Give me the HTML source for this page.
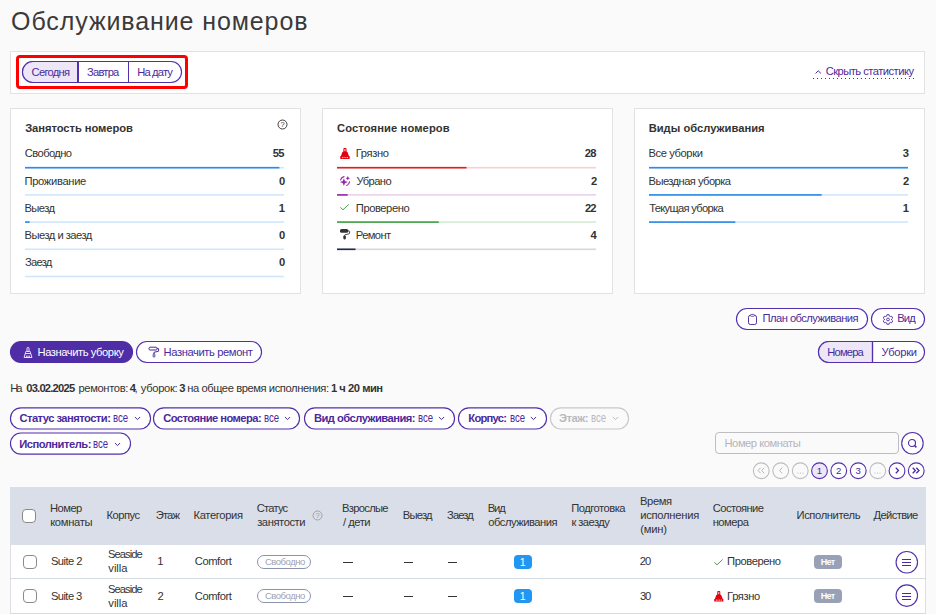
<!DOCTYPE html>
<html lang="ru">
<head>
<meta charset="utf-8">
<title>Обслуживание номеров</title>
<style>
*{box-sizing:border-box;margin:0;padding:0}
html,body{width:936px;height:614px;overflow:hidden}
body{background:#fafafa;font-family:"Liberation Sans",sans-serif;font-size:11.2px;color:#333;position:relative}
.abs{position:absolute}
.t{position:absolute;white-space:nowrap}
.panel{position:absolute;background:#fff;border:1px solid #e2e2e2}
.cb{position:absolute;width:14px;height:14px;border:1px solid #8a8a8a;border-radius:4px;background:#fff}
svg{overflow:visible}
</style>
</head>
<body>
<span class="t" style="left:11.1px;top:4.64px;line-height:32px;letter-spacing:0.89px;font-size:25px;color:#3a3a3a">Обслуживание номеров</span>
<div class="panel" style="left:10px;top:51px;width:915px;height:43px"></div>
<div class="abs" style="left:16px;top:55px;width:172px;height:34px;border:3px solid #f00;border-radius:4px"></div>
<svg class="abs" style="left:0;top:0" width="936" height="614" viewBox="0 0 936 614"><rect x="22.46" y="61.46" width="159.08" height="21.08" rx="10.54" fill="#fff" stroke="#5230ad" stroke-width="1.12"/><path d="M33 61.46H78V82.54H33A10.54 10.54 0 0 1 33 61.46Z" fill="#ece6f7" stroke="#5230ad" stroke-width="1.12"/><path d="M78 61.46V82.54" stroke="#5230ad" stroke-width="2"/><path d="M128.500 61.500V82.500" stroke="#5230ad" stroke-width="1"/></svg>
<span class="t" style="left:31.6px;top:64.62px;line-height:14px;letter-spacing:-0.73px;color:#4a2a9c">Сегодня</span>
<span class="t" style="left:87.05px;top:64.62px;line-height:14px;letter-spacing:-0.79px;color:#4a2a9c">Завтра</span>
<span class="t" style="left:137.25px;top:64.62px;line-height:14px;letter-spacing:-0.85px;color:#4a2a9c">На дату</span>
<svg class="abs" style="left:814.5px;top:69.5px" width="6.5" height="4" viewBox="0 0 6.5 4"><path d="M.6 3.4 3.25.8 5.9 3.4" fill="none" stroke="#4a2a9c" stroke-width="1"/></svg>
<span class="t" style="left:825.65px;top:64.42px;line-height:14px;letter-spacing:-0.53px;color:#4a2a9c">Скрыть статистику</span>
<div class="abs" style="left:813px;top:78px;width:102px;height:1px;background:repeating-linear-gradient(90deg,#4a2a9c 0,#4a2a9c 1.5px,transparent 1.5px,transparent 4px)"></div>
<div class="panel" style="left:10px;top:108px;width:291px;height:186px"></div>
<div class="panel" style="left:322px;top:108px;width:291px;height:186px"></div>
<div class="panel" style="left:634px;top:108px;width:291px;height:186px"></div>
<span class="t" style="left:25.15px;top:121.12px;line-height:14px;letter-spacing:-0.06px;font-weight:700">Занятость номеров</span>
<span class="t" style="left:336.95px;top:121.12px;line-height:14px;letter-spacing:0.11px;font-weight:700">Состояние номеров</span>
<span class="t" style="left:648.65px;top:121.12px;line-height:14px;letter-spacing:0.01px;font-weight:700">Виды обслуживания</span>
<svg class="abs" style="left:277px;top:118.8px" width="11" height="11" viewBox="0 0 11 11"><circle cx="5.5" cy="5.5" r="4.5" fill="none" stroke="#333" stroke-width="0.95"/><text x="5.5" y="8" font-size="7.5" font-family="Liberation Sans, sans-serif" text-anchor="middle" fill="#333">?</text></svg>
<span class="t" style="left:24.85px;top:146.12px;line-height:14px;letter-spacing:-0.61px">Свободно</span>
<span class="t" style="left:272.85px;top:146.12px;line-height:14px;letter-spacing:-0.8px;font-weight:700">55</span>
<span class="t" style="left:24.5px;top:174.12px;line-height:14px;letter-spacing:-0.33px">Проживание</span>
<span class="t" style="left:278.95px;top:174.12px;line-height:14px;letter-spacing:0px;font-weight:700">0</span>
<span class="t" style="left:24.5px;top:201.12px;line-height:14px;letter-spacing:-0.59px">Выезд</span>
<span class="t" style="left:278.8px;top:201.12px;line-height:14px;letter-spacing:0px;font-weight:700">1</span>
<span class="t" style="left:24.5px;top:228.12px;line-height:14px;letter-spacing:-0.52px">Выезд и заезд</span>
<span class="t" style="left:278.95px;top:228.12px;line-height:14px;letter-spacing:0px;font-weight:700">0</span>
<span class="t" style="left:25.05px;top:255.12px;line-height:14px;letter-spacing:-0.76px">Заезд</span>
<span class="t" style="left:278.95px;top:255.12px;line-height:14px;letter-spacing:0px;font-weight:700">0</span>
<span class="t" style="left:355.8px;top:146.12px;line-height:14px;letter-spacing:-0.39px">Грязно</span>
<span class="t" style="left:584.85px;top:146.12px;line-height:14px;letter-spacing:-0.8px;font-weight:700">28</span>
<span class="t" style="left:356.4px;top:174.12px;line-height:14px;letter-spacing:-0.58px">Убрано</span>
<span class="t" style="left:590.9px;top:174.12px;line-height:14px;letter-spacing:0px;font-weight:700">2</span>
<span class="t" style="left:355.8px;top:201.12px;line-height:14px;letter-spacing:-0.44px">Проверено</span>
<span class="t" style="left:584.95px;top:201.12px;line-height:14px;letter-spacing:-0.8px;font-weight:700">22</span>
<span class="t" style="left:355.8px;top:228.12px;line-height:14px;letter-spacing:-0.63px">Ремонт</span>
<span class="t" style="left:590.55px;top:228.12px;line-height:14px;letter-spacing:0px;font-weight:700">4</span>
<span class="t" style="left:648.5px;top:146.12px;line-height:14px;letter-spacing:-0.41px">Все уборки</span>
<span class="t" style="left:902.85px;top:146.12px;line-height:14px;letter-spacing:0px;font-weight:700">3</span>
<span class="t" style="left:648.5px;top:174.12px;line-height:14px;letter-spacing:-0.56px">Выездная уборка</span>
<span class="t" style="left:902.9px;top:174.12px;line-height:14px;letter-spacing:0px;font-weight:700">2</span>
<span class="t" style="left:649.15px;top:201.12px;line-height:14px;letter-spacing:-0.69px">Текущая уборка</span>
<span class="t" style="left:902.8px;top:201.12px;line-height:14px;letter-spacing:0px;font-weight:700">1</span>
<svg class="abs" style="left:339.9px;top:148.1px" width="9.91" height="10.9" viewBox="0 0 10 11"><path d="M3.4 1Q3.4 0 4.3 0H5.7Q6.6 0 6.6 1V3.6L7.7 4.4 9 8H9.2Q9.8 8 9.8 8.6V10.4Q9.8 11 9.2 11H.8Q.2 11 .2 10.4V8.6Q.2 8 .8 8H1L2.3 4.4 3.4 3.6Z" fill="#e3000f"/><path d="M5 1V3.3" stroke="#fff" stroke-width=".9"/><path d="M2.4 9V10.2M4.1 9V10.2M5.9 9V10.2M7.6 9V10.2" stroke="#fff" stroke-width=".8"/></svg>
<svg class="abs" style="left:339.5px;top:175.6px" width="10" height="10" viewBox="0 0 10 10"><path d="M3.9 2.2 5 5 7.8 6.1 5 7.2 3.9 10 2.8 7.2 0 6.1 2.8 5zM7.8 0 8.5 1.5 10 2.2 8.5 2.9 7.8 4.4 7.1 2.9 5.6 2.2 7.1 1.5z" fill="#9c27b0"/><path d="M.6 3.8C1 2.3 2.3 1.1 4 .7M9.5 5.8C9.3 7.5 8.3 8.9 6.8 9.5" fill="none" stroke="#9c27b0" stroke-width="1.2" stroke-linecap="round"/></svg>
<svg class="abs" style="left:340.2px;top:203.8px" width="9" height="6.4" viewBox="0 0 9 6.4"><path d="M.4 3.4 3 5.8 8.7.5" fill="none" stroke="#43a047" stroke-width="1"/></svg>
<svg class="abs" style="left:339.9px;top:229.2px" width="10" height="10.4" viewBox="0 0 10 10.4"><rect x="0" y=".1" width="8.2" height="3.6" rx="1.5" fill="#333"/><path d="M8 1.9h.9c.4 0 .7.3.7.7v1.5c0 .4-.3.7-.6.8L5.1 5.7c-.3.1-.5.3-.5.6v.5" fill="none" stroke="#333" stroke-width=".9"/><rect x="3.3" y="6.5" width="2.6" height="3.9" rx="1.1" fill="#333"/></svg>
<svg class="abs" style="left:0px;top:0px" width="936" height="300" viewBox="0 0 936 300"><rect x="25" y="166.9" width="259" height="1.6" fill="#cfe6fb"/><rect x="25" y="166.9" width="254.38" height="1.6" fill="#2b8be6"/><rect x="25" y="194.1" width="259" height="1.6" fill="#cfe6fb"/><rect x="25" y="221.3" width="259" height="1.6" fill="#cfe6fb"/><rect x="25" y="221.3" width="4.62" height="1.6" fill="#2b8be6"/><rect x="25" y="248.5" width="259" height="1.6" fill="#cfe6fb"/><rect x="25" y="275.7" width="259" height="1.6" fill="#cfe6fb"/><rect x="337" y="166.9" width="259" height="1.6" fill="#f9cfcf"/><rect x="337" y="166.9" width="129.5" height="1.6" fill="#e02020"/><rect x="337" y="194.1" width="259" height="1.6" fill="#ead0ef"/><rect x="337" y="194.1" width="10.7" height="1.6" fill="#9c27b0"/><rect x="337" y="221.3" width="259" height="1.6" fill="#d3ecd4"/><rect x="337" y="221.3" width="101.75" height="1.6" fill="#43a047"/><rect x="337" y="248.5" width="259" height="1.6" fill="#d4d7df"/><rect x="337" y="248.5" width="18.5" height="1.6" fill="#1f2a4d"/><rect x="649" y="166.9" width="259" height="1.6" fill="#cfe6fb"/><rect x="649" y="166.9" width="259" height="1.6" fill="#2b8be6"/><rect x="649" y="194.1" width="259" height="1.6" fill="#cfe6fb"/><rect x="649" y="194.1" width="172.67" height="1.6" fill="#2b8be6"/><rect x="649" y="221.3" width="259" height="1.6" fill="#cfe6fb"/><rect x="649" y="221.3" width="86.33" height="1.6" fill="#2b8be6"/></svg>
<svg class="abs" style="left:0;top:0" width="936" height="614" viewBox="0 0 936 614"><rect x="736.46" y="308.46" width="131.08" height="21.08" rx="10.54" fill="#fff" stroke="#5230ad" stroke-width="1.12"/></svg>
<svg class="abs" style="left:748px;top:314.1px" width="9" height="11" viewBox="0 0 9 11"><rect x=".5" y="1.4" width="8" height="9.1" rx="1.8" fill="none" stroke="#4a2a9c" stroke-width=".95"/><rect x="2.5" y=".4" width="4" height="1.9" rx=".9" fill="#fff" stroke="#4a2a9c" stroke-width=".8"/></svg>
<span class="t" style="left:762.5px;top:311.42px;line-height:14px;letter-spacing:-0.54px;color:#4a2a9c">План обслуживания</span>
<svg class="abs" style="left:0;top:0" width="936" height="614" viewBox="0 0 936 614"><rect x="871.46" y="308.46" width="53.08" height="21.08" rx="10.54" fill="#fff" stroke="#5230ad" stroke-width="1.12"/></svg>
<svg class="abs" style="left:882.7px;top:314.1px" width="10" height="11" viewBox="0 0 10 11"><path d="M6.1 0.73 L3.9 0.73 L3.61 2.07 L2.72 2.58 L1.42 2.16 L0.31 4.07 L1.34 4.99 L1.34 6.01 L0.31 6.93 L1.42 8.84 L2.72 8.42 L3.61 8.93 L3.9 10.27 L6.1 10.27 L6.39 8.93 L7.28 8.42 L8.58 8.84 L9.69 6.93 L8.66 6.01 L8.66 4.99 L9.69 4.07 L8.58 2.16 L7.28 2.58 L6.39 2.07Z" fill="none" stroke="#4a2a9c" stroke-width=".9" stroke-linejoin="round"/><circle cx="5" cy="5.5" r="1.4" fill="none" stroke="#4a2a9c" stroke-width=".9"/></svg>
<span class="t" style="left:897.25px;top:311.42px;line-height:14px;letter-spacing:-0.85px;color:#4a2a9c">Вид</span>
<svg class="abs" style="left:0;top:0" width="936" height="614" viewBox="0 0 936 614"><rect x="10.46" y="341.46" width="122.08" height="21.08" rx="10.54" fill="#4f2da6" stroke="#4f2da6" stroke-width="1.12"/></svg>
<svg class="abs" style="left:22.8px;top:347.3px" width="10" height="11" viewBox="0 0 10 11"><path d="M4 4.4V1.3Q4 .5 4.8.5H5.2Q6 .5 6 1.3V4.4M2.5 6.5V5.3Q2.5 4.5 3.3 4.5H6.7Q7.5 4.5 7.5 5.3V6.5M2.2 6.5H7.8L8.9 10.5H1.1ZM3.6 10.5V8.6M5 10.5V8.6M6.4 10.5V8.6" fill="none" stroke="#fff" stroke-width=".85"/></svg>
<span class="t" style="left:37.5px;top:344.62px;line-height:14px;letter-spacing:-0.43px;color:#fff">Назначить уборку</span>
<svg class="abs" style="left:0;top:0" width="936" height="614" viewBox="0 0 936 614"><rect x="136.46" y="341.46" width="125.08" height="21.08" rx="10.54" fill="#fff" stroke="#5230ad" stroke-width="1.12"/></svg>
<svg class="abs" style="left:147.5px;top:346px" width="12" height="12" viewBox="0 0 12 12"><rect x="1" y="1.2" width="8" height="2.8" rx="1" fill="none" stroke="#4a2a9c" stroke-width="1"/><path d="M9 2.6h1.6v2.6L6 6.3v1.5" fill="none" stroke="#4a2a9c" stroke-width="1"/><rect x="5.2" y="7.6" width="1.6" height="3.6" rx=".8" fill="none" stroke="#4a2a9c" stroke-width=".9"/></svg>
<span class="t" style="left:163.5px;top:344.62px;line-height:14px;letter-spacing:-0.39px;color:#4a2a9c">Назначить ремонт</span>
<svg class="abs" style="left:0;top:0" width="936" height="614" viewBox="0 0 936 614"><rect x="818.46" y="341.46" width="106.08" height="21.08" rx="10.54" fill="#fff" stroke="#5230ad" stroke-width="1.12"/><path d="M829 341.46H872.5V362.54H829A10.54 10.54 0 0 1 829 341.46Z" fill="#ece6f7" stroke="#5230ad" stroke-width="1.12"/><path d="M872.5 341.46V362.54" stroke="#5230ad" stroke-width="1.25"/></svg>
<span class="t" style="left:827.25px;top:344.62px;line-height:14px;letter-spacing:-0.82px;color:#4a2a9c">Номера</span>
<span class="t" style="left:881.6px;top:344.62px;line-height:14px;letter-spacing:-0.27px;color:#4a2a9c">Уборки</span>
<span class="t" style="left:10.25px;top:381.12px;line-height:14px;letter-spacing:-2.2px">На</span>
<span class="t" style="left:26.2px;top:381.12px;line-height:14px;letter-spacing:-0.78px;font-weight:700">03.02.2025</span>
<span class="t" style="left:78.45px;top:381.12px;line-height:14px;letter-spacing:-0.36px">ремонтов:</span>
<span class="t" style="left:129.85px;top:381.12px;line-height:14px;letter-spacing:0px;font-weight:700">4</span>
<span class="t" style="left:134.6px;top:381.12px;line-height:14px;letter-spacing:0px">,</span>
<span class="t" style="left:140.85px;top:381.12px;line-height:14px;letter-spacing:-0.34px">уборок:</span>
<span class="t" style="left:179.25px;top:381.12px;line-height:14px;letter-spacing:0px;font-weight:700">3</span>
<span class="t" style="left:187.15px;top:381.12px;line-height:14px;letter-spacing:-0.42px">на общее время исполнения:</span>
<span class="t" style="left:330.95px;top:381.12px;line-height:14px;letter-spacing:-0.47px;font-weight:700">1 ч 20 мин</span>
<svg class="abs" style="left:0;top:0" width="936" height="614" viewBox="0 0 936 614"><rect x="10.46" y="407.86" width="140.08" height="21.08" rx="10.54" fill="#fff" stroke="#5230ad" stroke-width="1.12"/></svg>
<span class="t" style="left:19.45px;top:411.12px;line-height:14px;letter-spacing:-0.54px;font-weight:700;color:#4a2a9c">Статус занятости:</span>
<span class="t" style="left:113.14px;top:409.5px;line-height:16px;letter-spacing:0px;font-size:13px;color:#4a2a9c;transform:scaleX(0.737);transform-origin:0 0">все</span>
<svg class="abs" style="left:133.5px;top:415.8px" width="7" height="5" viewBox="0 0 7 5"><path d="M.9 1 3.5 3.6 6.1 1" fill="none" stroke="#4a2a9c" stroke-width="1"/></svg>
<svg class="abs" style="left:0;top:0" width="936" height="614" viewBox="0 0 936 614"><rect x="153.46" y="407.86" width="146.08" height="21.08" rx="10.54" fill="#fff" stroke="#5230ad" stroke-width="1.12"/></svg>
<span class="t" style="left:163.2px;top:411.12px;line-height:14px;letter-spacing:-0.55px;font-weight:700;color:#4a2a9c">Состояние номера:</span>
<span class="t" style="left:263.89px;top:409.5px;line-height:16px;letter-spacing:0px;font-size:13px;color:#4a2a9c;transform:scaleX(0.737);transform-origin:0 0">все</span>
<svg class="abs" style="left:283.8px;top:415.8px" width="7" height="5" viewBox="0 0 7 5"><path d="M.9 1 3.5 3.6 6.1 1" fill="none" stroke="#4a2a9c" stroke-width="1"/></svg>
<svg class="abs" style="left:0;top:0" width="936" height="614" viewBox="0 0 936 614"><rect x="304.46" y="407.86" width="150.08" height="21.08" rx="10.54" fill="#fff" stroke="#5230ad" stroke-width="1.12"/></svg>
<span class="t" style="left:313.9px;top:411.12px;line-height:14px;letter-spacing:-0.52px;font-weight:700;color:#4a2a9c">Вид обслуживания:</span>
<span class="t" style="left:418.14px;top:409.5px;line-height:16px;letter-spacing:0px;font-size:13px;color:#4a2a9c;transform:scaleX(0.737);transform-origin:0 0">все</span>
<svg class="abs" style="left:438px;top:415.8px" width="7" height="5" viewBox="0 0 7 5"><path d="M.9 1 3.5 3.6 6.1 1" fill="none" stroke="#4a2a9c" stroke-width="1"/></svg>
<svg class="abs" style="left:0;top:0" width="936" height="614" viewBox="0 0 936 614"><rect x="458.46" y="407.86" width="88.08" height="21.08" rx="10.54" fill="#fff" stroke="#5230ad" stroke-width="1.12"/></svg>
<span class="t" style="left:468.35px;top:411.12px;line-height:14px;letter-spacing:-0.76px;font-weight:700;color:#4a2a9c">Корпус:</span>
<span class="t" style="left:509.64px;top:409.5px;line-height:16px;letter-spacing:0px;font-size:13px;color:#4a2a9c;transform:scaleX(0.737);transform-origin:0 0">все</span>
<svg class="abs" style="left:530px;top:415.8px" width="7" height="5" viewBox="0 0 7 5"><path d="M.9 1 3.5 3.6 6.1 1" fill="none" stroke="#4a2a9c" stroke-width="1"/></svg>
<svg class="abs" style="left:0;top:0" width="936" height="614" viewBox="0 0 936 614"><rect x="550.46" y="407.86" width="78.08" height="21.08" rx="10.54" fill="#fafafa" stroke="#c8c8ce" stroke-width="1.12"/></svg>
<span class="t" style="left:559.1px;top:411.12px;line-height:14px;letter-spacing:-0.49px;font-weight:700;color:#b9b9c0">Этаж:</span>
<span class="t" style="left:591.24px;top:409.5px;line-height:16px;letter-spacing:0px;font-size:13px;color:#b9b9c0;transform:scaleX(0.737);transform-origin:0 0">все</span>
<svg class="abs" style="left:611.5px;top:415.8px" width="7" height="5" viewBox="0 0 7 5"><path d="M.9 1 3.5 3.6 6.1 1" fill="none" stroke="#b9b9c0" stroke-width="1"/></svg>
<svg class="abs" style="left:0;top:0" width="936" height="614" viewBox="0 0 936 614"><rect x="10.46" y="433.06" width="120.08" height="21.08" rx="10.54" fill="#fff" stroke="#5230ad" stroke-width="1.12"/></svg>
<span class="t" style="left:19.15px;top:437.12px;line-height:14px;letter-spacing:-0.5px;font-weight:700;color:#4a2a9c">Исполнитель:</span>
<span class="t" style="left:93.14px;top:435.5px;line-height:16px;letter-spacing:0px;font-size:13px;color:#4a2a9c;transform:scaleX(0.737);transform-origin:0 0">все</span>
<svg class="abs" style="left:113.5px;top:441.8px" width="7" height="5" viewBox="0 0 7 5"><path d="M.9 1 3.5 3.6 6.1 1" fill="none" stroke="#4a2a9c" stroke-width="1"/></svg>
<div class="abs" style="left:715px;top:432px;width:184px;height:22px;border:1px solid #bdbdc2;border-radius:4px;background:#fafafa"></div>
<span class="t" style="left:724.5px;top:436.12px;line-height:14px;letter-spacing:-0.46px;color:#b4b4bc">Номер комнаты</span>
<svg class="abs" style="left:0;top:0" width="936" height="614" viewBox="0 0 936 614"><circle cx="912.45" cy="443.2" r="10.74" fill="#fff" stroke="#5230ad" stroke-width="1.12"/></svg>
<svg class="abs" style="left:907.3px;top:438px" width="11" height="11" viewBox="0 0 11 11"><circle cx="5" cy="5" r="3.5" fill="none" stroke="#4a2a9c" stroke-width="1.1"/><path d="M7.5 7.5 9.4 9.4" stroke="#4a2a9c" stroke-width="1.5"/></svg>
<svg class="abs" style="left:0;top:0" width="936" height="614" viewBox="0 0 936 614"><circle cx="761.25" cy="470.75" r="7.89" fill="#fafafa" stroke="#bdbdc0" stroke-width="1.12"/></svg>
<svg class="abs" style="left:757.25px;top:467.25px" width="8" height="7" viewBox="0 0 8 7"><path d="M3.7 .7 1 3.5 3.7 6.3M7.3 .7 4.6 3.5 7.3 6.3" fill="none" stroke="#b5b5b8" stroke-width="1"/></svg>
<svg class="abs" style="left:0;top:0" width="936" height="614" viewBox="0 0 936 614"><circle cx="780.75" cy="470.75" r="7.89" fill="#fafafa" stroke="#bdbdc0" stroke-width="1.12"/></svg>
<svg class="abs" style="left:776.75px;top:467.25px" width="8" height="7" viewBox="0 0 8 7"><path d="M5.2 .7 2.5 3.5 5.2 6.3" fill="none" stroke="#b5b5b8" stroke-width="1"/></svg>
<svg class="abs" style="left:0;top:0" width="936" height="614" viewBox="0 0 936 614"><circle cx="800.25" cy="470.75" r="7.89" fill="#fafafa" stroke="#bdbdc0" stroke-width="1.12"/></svg>
<svg class="abs" style="left:796.75px;top:472px" width="7" height="2" viewBox="0 0 7 2"><circle cx="1" cy="1" r=".6" fill="#b5b5b8"/><circle cx="3.5" cy="1" r=".6" fill="#b5b5b8"/><circle cx="6" cy="1" r=".6" fill="#b5b5b8"/></svg>
<svg class="abs" style="left:0;top:0" width="936" height="614" viewBox="0 0 936 614"><circle cx="819.5" cy="470.75" r="7.89" fill="#ece6f7" stroke="#5230ad" stroke-width="1.12"/></svg>
<span class="t" style="left:816.67px;top:464.67px;line-height:12px;letter-spacing:0px;font-size:9.6px;color:#4a2a9c">1</span>
<svg class="abs" style="left:0;top:0" width="936" height="614" viewBox="0 0 936 614"><circle cx="838.75" cy="470.75" r="7.89" fill="#fff" stroke="#5230ad" stroke-width="1.12"/></svg>
<span class="t" style="left:836.08px;top:464.67px;line-height:12px;letter-spacing:0px;font-size:9.6px;color:#4a2a9c">2</span>
<svg class="abs" style="left:0;top:0" width="936" height="614" viewBox="0 0 936 614"><circle cx="858.25" cy="470.75" r="7.89" fill="#fff" stroke="#5230ad" stroke-width="1.12"/></svg>
<span class="t" style="left:855.62px;top:464.67px;line-height:12px;letter-spacing:0px;font-size:9.6px;color:#4a2a9c">3</span>
<svg class="abs" style="left:0;top:0" width="936" height="614" viewBox="0 0 936 614"><circle cx="877.75" cy="470.75" r="7.89" fill="#fafafa" stroke="#bdbdc0" stroke-width="1.12"/></svg>
<svg class="abs" style="left:874.25px;top:472px" width="7" height="2" viewBox="0 0 7 2"><circle cx="1" cy="1" r=".6" fill="#b5b5b8"/><circle cx="3.5" cy="1" r=".6" fill="#b5b5b8"/><circle cx="6" cy="1" r=".6" fill="#b5b5b8"/></svg>
<svg class="abs" style="left:0;top:0" width="936" height="614" viewBox="0 0 936 614"><circle cx="897" cy="470.75" r="7.89" fill="#fff" stroke="#5230ad" stroke-width="1.12"/></svg>
<svg class="abs" style="left:893px;top:467.25px" width="8" height="7" viewBox="0 0 8 7"><path d="M2.8 .7 5.5 3.5 2.8 6.3" fill="none" stroke="#4a2a9c" stroke-width="1.3"/></svg>
<svg class="abs" style="left:0;top:0" width="936" height="614" viewBox="0 0 936 614"><circle cx="916.25" cy="470.75" r="7.89" fill="#fff" stroke="#5230ad" stroke-width="1.12"/></svg>
<svg class="abs" style="left:912.25px;top:467.25px" width="8" height="7" viewBox="0 0 8 7"><path d="M.7 .7 3.4 3.5 .7 6.3M4.3 .7 7 3.5 4.3 6.3" fill="none" stroke="#4a2a9c" stroke-width="1.3"/></svg>
<div class="abs" style="left:10px;top:487px;width:916px;height:58px;background:#d9dee8"></div>
<div class="abs" style="left:10px;top:545px;width:916px;height:69px;background:#fff;border-left:1px solid #dcdfe6;border-right:1px solid #dcdfe6"></div>
<div class="abs" style="left:10px;top:578px;width:916px;height:1px;background:#d5dae4"></div>
<div class="abs" style="left:10px;top:613px;width:916px;height:1px;background:#d5dae4"></div>
<div class="cb" style="left:22px;top:509px"></div>
<span class="t" style="left:50px;top:501.12px;line-height:14px;letter-spacing:-0.53px">Номер</span>
<span class="t" style="left:50.15px;top:515.12px;line-height:14px;letter-spacing:-0.3px">комнаты</span>
<span class="t" style="left:106.5px;top:508.12px;line-height:14px;letter-spacing:-0.48px">Корпус</span>
<span class="t" style="left:155.8px;top:508.12px;line-height:14px;letter-spacing:-0.88px">Этаж</span>
<span class="t" style="left:193.5px;top:508.12px;line-height:14px;letter-spacing:-0.34px">Категория</span>
<span class="t" style="left:256.85px;top:501.12px;line-height:14px;letter-spacing:-0.81px">Статус</span>
<span class="t" style="left:257.15px;top:515.12px;line-height:14px;letter-spacing:-0.42px">занятости</span>
<svg class="abs" style="left:312px;top:510.3px" width="11" height="11" viewBox="0 0 11 11"><circle cx="5.5" cy="5.5" r="4.5" fill="none" stroke="#9a9aa0" stroke-width="0.9"/><text x="5.5" y="8" font-size="7.5" font-family="Liberation Sans, sans-serif" text-anchor="middle" fill="#9a9aa0">?</text></svg>
<span class="t" style="left:342px;top:501.12px;line-height:14px;letter-spacing:-0.69px">Взрослые</span>
<span class="t" style="left:342.9px;top:515.12px;line-height:14px;letter-spacing:-0.45px">/ дети</span>
<span class="t" style="left:402.75px;top:508.12px;line-height:14px;letter-spacing:-0.78px">Выезд</span>
<span class="t" style="left:447.05px;top:508.12px;line-height:14px;letter-spacing:-0.9px">Заезд</span>
<span class="t" style="left:487.75px;top:501.12px;line-height:14px;letter-spacing:-1.1px">Вид</span>
<span class="t" style="left:488.2px;top:515.12px;line-height:14px;letter-spacing:-0.47px">обслуживания</span>
<span class="t" style="left:571.25px;top:501.12px;line-height:14px;letter-spacing:-0.51px">Подготовка</span>
<span class="t" style="left:571.4px;top:515.12px;line-height:14px;letter-spacing:-0.55px">к заезду</span>
<span class="t" style="left:640px;top:494.12px;line-height:14px;letter-spacing:-0.39px">Время</span>
<span class="t" style="left:640.15px;top:508.12px;line-height:14px;letter-spacing:-0.24px">исполнения</span>
<span class="t" style="left:640.2px;top:522.12px;line-height:14px;letter-spacing:-0.17px">(мин)</span>
<span class="t" style="left:712.85px;top:501.12px;line-height:14px;letter-spacing:-0.59px">Состояние</span>
<span class="t" style="left:712.65px;top:515.12px;line-height:14px;letter-spacing:-0.51px">номера</span>
<span class="t" style="left:796.5px;top:508.12px;line-height:14px;letter-spacing:-0.38px">Исполнитель</span>
<span class="t" style="left:873.5px;top:508.12px;line-height:14px;letter-spacing:-0.62px">Действие</span>
<div class="cb" style="left:23px;top:555px"></div>
<span class="t" style="left:50.9px;top:554.12px;line-height:14px;letter-spacing:-0.55px">Suite 2</span>
<span class="t" style="left:107.9px;top:547.12px;line-height:14px;letter-spacing:-0.92px">Seaside</span>
<span class="t" style="left:108.35px;top:561.12px;line-height:14px;letter-spacing:-0.06px">villa</span>
<span class="t" style="left:157.15px;top:554.12px;line-height:14px;letter-spacing:-0.5px">1</span>
<span class="t" style="left:194.85px;top:554.12px;line-height:14px;letter-spacing:-0.45px">Comfort</span>
<div class="abs" style="left:257px;top:555px;width:54px;height:14px;border-radius:7px;border:1px solid #8a94ad;background:#fff"></div>
<span class="t" style="left:264.9px;top:556.01px;line-height:12px;letter-spacing:-0.47px;font-size:9.5px;color:#9aa3b8">Свободно</span>
<div class="abs" style="left:343.25px;top:561.5px;width:9.25px;height:1px;background:#333"></div>
<div class="abs" style="left:403.75px;top:561.5px;width:9.25px;height:1px;background:#333"></div>
<div class="abs" style="left:448px;top:561.5px;width:9.25px;height:1px;background:#333"></div>
<div class="abs" style="left:514px;top:555px;width:18px;height:14px;border-radius:4px;background:#2196f3"></div>
<span class="t" style="left:519.8px;top:555.56px;line-height:13px;letter-spacing:0px;font-size:10.5px;color:#fff">1</span>
<span class="t" style="left:639.85px;top:554.12px;line-height:14px;letter-spacing:-1px">20</span>
<svg class="abs" style="left:713.8px;top:559px" width="9" height="6.4" viewBox="0 0 9 6.4"><path d="M.4 3.4 3 5.8 8.7.5" fill="none" stroke="#43a047" stroke-width="1"/></svg>
<span class="t" style="left:727.1px;top:554.12px;line-height:14px;letter-spacing:-0.43px">Проверено</span>
<div class="abs" style="left:814px;top:555px;width:28px;height:14px;border-radius:4px;background:#98a1b5"></div>
<span class="t" style="left:820.8px;top:556.68px;line-height:11px;letter-spacing:-0.73px;font-size:9px;font-weight:700;color:#fff">Нет</span>
<svg class="abs" style="left:0;top:0" width="936" height="614" viewBox="0 0 936 614"><circle cx="906.8" cy="562.3" r="10.74" fill="#fff" stroke="#5230ad" stroke-width="1.12"/></svg>
<svg class="abs" style="left:901px;top:557px" width="11" height="11" viewBox="0 0 11 11"><path d="M1 2.5h9M1 5.5h9M1 8.5h9" stroke="#4a2a9c" stroke-width="1.1"/></svg>
<div class="cb" style="left:23px;top:589px"></div>
<span class="t" style="left:50.9px;top:589.12px;line-height:14px;letter-spacing:-0.57px">Suite 3</span>
<span class="t" style="left:107.9px;top:582.12px;line-height:14px;letter-spacing:-0.92px">Seaside</span>
<span class="t" style="left:108.35px;top:596.12px;line-height:14px;letter-spacing:-0.06px">villa</span>
<span class="t" style="left:157.45px;top:589.12px;line-height:14px;letter-spacing:-0.5px">2</span>
<span class="t" style="left:194.85px;top:589.12px;line-height:14px;letter-spacing:-0.45px">Comfort</span>
<div class="abs" style="left:257px;top:589px;width:54px;height:14px;border-radius:7px;border:1px solid #8a94ad;background:#fff"></div>
<span class="t" style="left:264.9px;top:590.01px;line-height:12px;letter-spacing:-0.47px;font-size:9.5px;color:#9aa3b8">Свободно</span>
<div class="abs" style="left:343.25px;top:595.5px;width:9.25px;height:1px;background:#333"></div>
<div class="abs" style="left:403.75px;top:595.5px;width:9.25px;height:1px;background:#333"></div>
<div class="abs" style="left:448px;top:595.5px;width:9.25px;height:1px;background:#333"></div>
<div class="abs" style="left:514px;top:589px;width:18px;height:14px;border-radius:4px;background:#2196f3"></div>
<span class="t" style="left:519.8px;top:589.56px;line-height:13px;letter-spacing:0px;font-size:10.5px;color:#fff">1</span>
<span class="t" style="left:639.95px;top:589.12px;line-height:14px;letter-spacing:-1.1px">30</span>
<svg class="abs" style="left:713.5px;top:590.5px" width="9.55" height="10.5" viewBox="0 0 10 11"><path d="M3.4 1Q3.4 0 4.3 0H5.7Q6.6 0 6.6 1V3.6L7.7 4.4 9 8H9.2Q9.8 8 9.8 8.6V10.4Q9.8 11 9.2 11H.8Q.2 11 .2 10.4V8.6Q.2 8 .8 8H1L2.3 4.4 3.4 3.6Z" fill="#e3000f"/><path d="M5 1V3.3" stroke="#fff" stroke-width=".9"/><path d="M2.4 9V10.2M4.1 9V10.2M5.9 9V10.2M7.6 9V10.2" stroke="#fff" stroke-width=".8"/></svg>
<span class="t" style="left:727.1px;top:589.12px;line-height:14px;letter-spacing:-0.39px">Грязно</span>
<div class="abs" style="left:814px;top:589px;width:28px;height:14px;border-radius:4px;background:#98a1b5"></div>
<span class="t" style="left:820.8px;top:590.68px;line-height:11px;letter-spacing:-0.73px;font-size:9px;font-weight:700;color:#fff">Нет</span>
<svg class="abs" style="left:0;top:0" width="936" height="614" viewBox="0 0 936 614"><circle cx="906.8" cy="595.6" r="10.74" fill="#fff" stroke="#5230ad" stroke-width="1.12"/></svg>
<svg class="abs" style="left:901px;top:591px" width="11" height="11" viewBox="0 0 11 11"><path d="M1 2.5h9M1 5.5h9M1 8.5h9" stroke="#4a2a9c" stroke-width="1.1"/></svg>
</body>
</html>
